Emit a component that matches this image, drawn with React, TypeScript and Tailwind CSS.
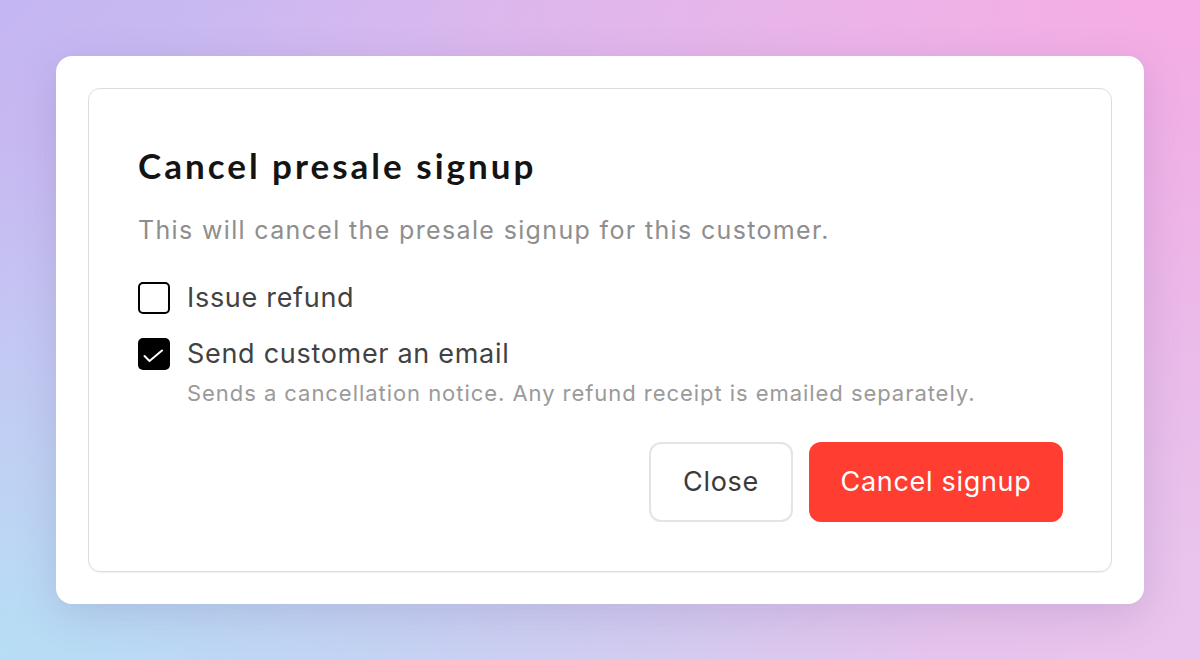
import { useState } from 'react'

export default function App() {
  const [refund, setRefund] = useState(false)
  const [email, setEmail] = useState(true)

  return (
    <main className="w-[1200px] h-[660px] overflow-hidden bg-[radial-gradient(ellipse_at_0%_100%,#b6def5_0%,rgba(182,222,245,0)_55%),radial-gradient(ellipse_at_100%_0%,#f6ace4_0%,rgba(246,172,228,0)_60%),linear-gradient(135deg,#c4b6f2_0%,#d8c2f0_50%,#ebc4ea_100%)] p-14 font-['Inter',sans-serif]">
      <div className="h-full rounded-2xl bg-white p-8 shadow-[0_10px_40px_rgba(90,70,140,0.18)]">
        <div className="h-full rounded-xl border border-[#dcdcdc] pl-[49px] pr-12 pt-[56px] shadow-[0_1px_1px_rgba(0,0,0,0.06)]">
          {/* Header */}
          <h1 className="font-['Lato',sans-serif] text-[35px] font-bold leading-[40px] tracking-[3px] text-[#141414]">
            Cancel presale signup
          </h1>
          <p className="mt-[29px] text-[25px] leading-[32px] tracking-[1.35px] text-[#8e8e8e]">
            This will cancel the presale signup for this customer.
          </p>

          {/* Options */}
          <div className="mt-[35px] flex flex-col gap-[22px]">
            <label className="flex items-center gap-[17px] cursor-pointer" onClick={() => setRefund(!refund)}>
              <Box checked={refund} />
              <span className="text-[27px] leading-[34px] tracking-[0.7px] text-[#424242]">Issue refund</span>
            </label>
            <div>
              <label className="flex items-center gap-[17px] cursor-pointer" onClick={() => setEmail(!email)}>
                <Box checked={email} />
                <span className="text-[27px] leading-[34px] tracking-[0.7px] text-[#424242]">Send customer an email</span>
              </label>
              <p className="ml-[49px] mt-2 text-[22px] leading-[28px] tracking-[0.95px] text-[#9a9a9a]">
                Sends a cancellation notice. Any refund receipt is emailed separately.
              </p>
            </div>
          </div>

          {/* Actions */}
          <div className="mt-[35px] flex justify-end gap-4">
            <button className="h-20 w-36 rounded-xl border-2 border-[#e4e4e8] bg-white text-[27px] tracking-[0.7px] text-[#3a3a3a]">
              Close
            </button>
            <button className="h-20 w-[254px] rounded-xl bg-[#ff3d30] text-[27px] tracking-[0.7px] text-white">
              Cancel signup
            </button>
          </div>
        </div>
      </div>
    </main>
  )
}

function Box({ checked }: { checked: boolean }) {
  return checked ? (
    <span className="block h-8 w-8 shrink-0 rounded-[5px] bg-black">
      <svg width="32" height="32" viewBox="0 0 32 32" fill="none">
        <path d="M6.5 18 L11.5 23 L24 12.5" stroke="white" strokeWidth="2" strokeLinecap="round" strokeLinejoin="round" />
      </svg>
    </span>
  ) : (
    <span className="h-8 w-8 shrink-0 rounded-[5px] border-2 border-black bg-white" />
  )
}
